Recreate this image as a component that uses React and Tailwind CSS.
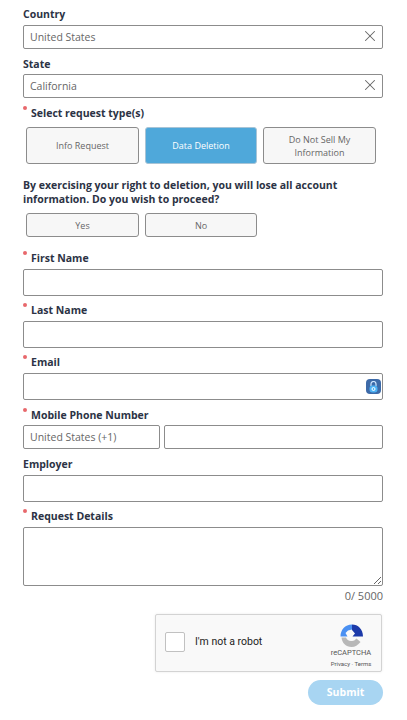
import React from 'react';
import { X } from 'lucide-react';

const Label = ({ children, required, className = '' }) => (
    <div className={`relative flex h-[16px] items-center text-[10.5px] font-bold leading-[16px] text-[#2c3345] ${required ? 'pl-[8px]' : ''} ${className}`}>
        {required && <span className="absolute left-[0px] top-[1px] h-[4px] w-[4px] rounded-full bg-[#e8686c]" />}
        <span>{children}</span>
    </div>
);

const Field = ({ value, clearable, className = '', children }) => (
    <div className={`relative flex items-center rounded-[2px] border border-[#8c8c8c] bg-white px-[6px] pt-[1px] text-[10.5px] text-[#666] ${className}`}>
        {value}
        {clearable && <X className="absolute right-[3px] top-[1px] text-[#666]" size={18} strokeWidth={1.4} />}
        {children}
    </div>
);

const Choice = ({ children, active, className = '' }) => (
    <div className={`flex items-center justify-center rounded-[3px] border px-2 text-center text-[9px] leading-[13px] ${active ? 'border-[#a8c4d6] bg-[#4fa8da] text-white' : 'border-[#8c8c8c] bg-[#f7f7f7] text-[#666]'} ${className}`}>
        {children}
    </div>
);

const RecaptchaLogo = () => (
    <svg width="23" height="23" viewBox="0 0 23 23">
        <path d="M0.5 12.5 C0.5 6 5 0.5 12 0.5 L12 5.5 L8 6.5 L5.5 9 L7.5 12.5 Z" fill="#4a90f2" />
        <path d="M12 0.5 C18 0.5 23 5 23 12.5 L12.5 12.5 L15 9.5 L12 6 Z" fill="#1c3aa9" />
        <path d="M1.5 13.5 L6 13.5 C7 16 9 17.5 12 17 C14 17 15.5 15.5 16.5 14.5 L20.5 18 C18 21 15 23 11.5 23 C6 23 2 19 1.5 13.5 Z" fill="#b8b8b8" />
    </svg>
);

export default function App() {
    return (
        <div className="h-[720px] w-[407px] overflow-hidden bg-white pl-[23px] pr-[24px] pt-[6px] font-['Open_Sans',sans-serif]">
            <Label>Country</Label>
            <Field value="United States" clearable className="mt-[3px] h-[24px]" />
            <Label className="mt-[7px]">State</Label>
            <Field value="California" clearable className="mt-[2px] h-[24px]" />
            <Label required className="mt-[7px]">Select request type(s)</Label>

            <div className="mt-[6px] flex gap-[6px] pl-[3px]">
                <Choice className="h-[37px] w-[113px]">Info Request</Choice>
                <Choice active className="h-[37px] w-[112px]">Data Deletion</Choice>
                <Choice className="h-[37px] w-[113px]">Do Not Sell My Information</Choice>
            </div>

            <p className="mt-[14px] text-[10.5px] font-bold leading-[14px] text-[#2c3345]">
                By exercising your right to deletion, you will lose all account information. Do you wish to proceed?
            </p>
            <div className="mt-[7px] flex gap-[6px] pl-[3px]">
                <Choice className="h-[24px] w-[113px]">Yes</Choice>
                <Choice className="h-[24px] w-[112px]">No</Choice>
            </div>

            <Label required className="mt-[13px]">First Name</Label>
            <Field className="mt-[3px] h-[27px]" />
            <Label required className="mt-[6px]">Last Name</Label>
            <Field className="mt-[3px] h-[27px]" />
            <Label required className="mt-[6px]">Email</Label>
            <Field className="mt-[3px] h-[27px]">
                <span className="absolute right-[1px] top-[5px] flex h-[15px] w-[15px] items-center justify-center rounded-[4px] bg-[#3d6aa8]">
                    <svg width="9" height="12" viewBox="0 0 9 12" fill="none">
                        <path d="M2 5 V3 A2.5 2.5 0 0 1 7 3 V5" stroke="#cfe6ff" strokeWidth="1.2" />
                        <rect x="0.5" y="4.5" width="8" height="7" rx="3" fill="#4db2f5" />
                        <circle cx="4.5" cy="8" r="1.5" fill="none" stroke="#fff" strokeWidth="1" />
                    </svg>
                </span>
            </Field>
            <Label required className="mt-[7px]">Mobile Phone Number</Label>
            <div className="mt-[2px] flex gap-[4px]">
                <Field value="United States (+1)" className="h-[24px] w-[137px]" />
                <Field className="h-[24px] flex-1" />
            </div>
            <Label className="mt-[7px]">Employer</Label>
            <Field className="mt-[3px] h-[27px]" />
            <Label required className="mt-[6px]">Request Details</Label>
            <textarea className="mt-[3px] block h-[59px] w-full rounded-[2px] border border-[#8c8c8c] bg-white" />
            <div className="mt-[2px] text-right text-[11px] leading-[16px] text-[#666]">0/ 5000</div>

            <div className="ml-[132px] mt-[10px] flex h-[58px] w-[227px] items-center rounded-[2px] border border-[#d3d3d3] bg-[#f9f9f9] pb-[3px] pl-[9px] shadow-[0_0_3px_rgba(0,0,0,0.08)]">
                <div className="h-[20px] w-[20px] rounded-[2px] border border-[#c1c1c1] bg-white" />
                <span className="ml-[10px] font-['Roboto',sans-serif] text-[10.5px] text-[#222]">I'm not a robot</span>
                <div className="ml-auto mr-[8px] mt-[9px] flex w-[44px] flex-col items-center font-['Roboto',sans-serif]">
                    <RecaptchaLogo />
                    <span className="mt-[1px] text-[7.5px] leading-[10px] text-[#555]">reCAPTCHA</span>
                    <span className="mt-[2px] whitespace-nowrap text-[6px] leading-[8px] text-[#555]">Privacy · Terms</span>
                </div>
            </div>
            <div className="mt-[8px] flex justify-end">
                <button className="h-[25px] w-[75px] rounded-[13px] bg-[#a8d5f2] text-[10.5px] font-bold text-white">Submit</button>
            </div>
        </div>
    );
}
